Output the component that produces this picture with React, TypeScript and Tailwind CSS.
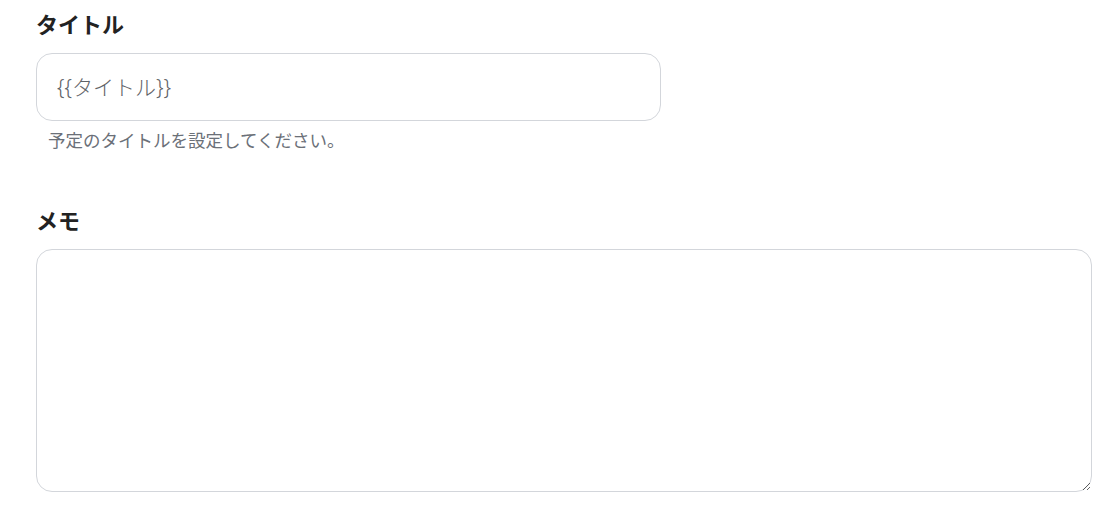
export default function App() {
  return (
    <div
      className="min-h-screen bg-white pl-[36px] pt-[8px]"
      style={{ fontFamily: '"Noto Sans", "Noto Sans CJK JP", sans-serif' }}
    >
      <div className="w-[1056px]">
        <label className="block text-[22px] font-bold leading-[32px] text-[#222]">タイトル</label>
        <input
          type="text"
          placeholder="{{タイトル}}"
          className="mt-[13px] block h-[68px] w-[625px] rounded-[16px] border border-[#d3d6db] px-[20px] text-[21px] font-light text-[#333] outline-none placeholder:text-[#5f6368]"
        />
        <p className="mt-[7px] pl-[12px] text-[17.5px] leading-[24px] text-[#6b7078]">
          予定のタイトルを設定してください。
        </p>

        <label className="mt-[52px] block text-[22px] font-bold leading-[32px] text-[#222]">メモ</label>
        <textarea className="mt-[13px] block h-[243px] w-[1056px] rounded-[16px] border border-[#d3d6db] px-[20px] py-[14px] text-[18px] outline-none" />
      </div>
    </div>
  );
}
